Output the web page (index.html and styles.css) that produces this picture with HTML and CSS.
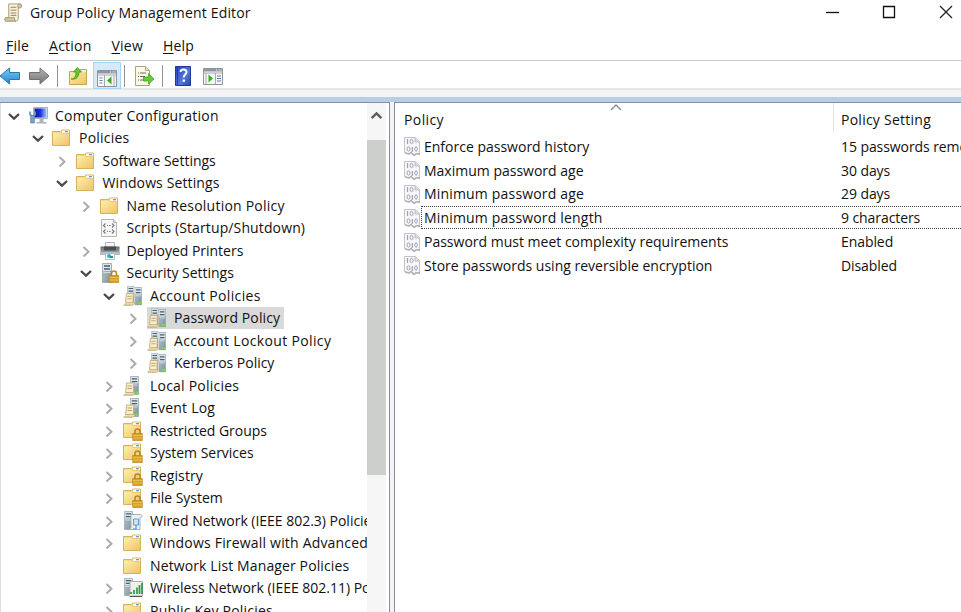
FILE: index.html
```html
<!DOCTYPE html>
<html lang="en">
<head>
<meta charset="utf-8">
<title>Group Policy Management Editor</title>
<link rel="stylesheet" href="styles.css">
</head>
<body>
<svg class="defs" width="0" height="0">
  <defs>
    <linearGradient id="gold" x1="0" y1="0" x2="1" y2="1"><stop offset="0" stop-color="#ffeeb0"/><stop offset="1" stop-color="#ecc663"/></linearGradient>
    <linearGradient id="steel" x1="0" y1="0" x2="1" y2="1"><stop offset="0" stop-color="#b9c8d1"/><stop offset="1" stop-color="#7f919c"/></linearGradient>
    <linearGradient id="screen" x1="0" y1="0" x2="1" y2="0"><stop offset="0" stop-color="#0717b8"/><stop offset=".5" stop-color="#1a35d4"/><stop offset="1" stop-color="#a8c4fa"/></linearGradient>
    <linearGradient id="blue" x1="0" y1="0" x2="0" y2="1"><stop offset="0" stop-color="#79cdf5"/><stop offset="1" stop-color="#2484cd"/></linearGradient>
    <linearGradient id="grey" x1="0" y1="0" x2="0" y2="1"><stop offset="0" stop-color="#b4b4b4"/><stop offset="1" stop-color="#747474"/></linearGradient>
    <linearGradient id="book" x1="0" y1="0" x2="1" y2="1"><stop offset="0" stop-color="#2447b4"/><stop offset=".6" stop-color="#5277dc"/><stop offset="1" stop-color="#2443a8"/></linearGradient>
    <linearGradient id="case" x1="0" y1="0" x2="0" y2="1"><stop offset="0" stop-color="#66686b"/><stop offset=".5" stop-color="#8d9093"/><stop offset="1" stop-color="#b4b7b9"/></linearGradient>
  </defs>
  <symbol id="open" viewBox="0 0 12 12"><path d="M1 4 6 8.700 11 4" fill="none" stroke="#4a4a4a" stroke-width="2.300"/></symbol>
  <symbol id="closed" viewBox="0 0 12 12"><path d="M3.500 2 8.500 6.800 3.500 11.500" fill="none" stroke="#ababab" stroke-width="2"/></symbol>
  <symbol id="lock" viewBox="0 0 20 20"><path d="M12 13v-2.500a2.500 2.500 0 0 1 5 0V13" fill="none" stroke="#b58a2a" stroke-width="1.600"/><path d="M9.700 12.500h9.600v7H9.700z" fill="#d8a029" stroke="#b07b18" stroke-width=".6"/><path d="M10 14.500h9M10 17h9" stroke="#f0c65a" stroke-width=".8"/></symbol>
  <symbol id="folder" viewBox="0 0 20 20"><path d="M.5 3.500h8l1.500-1.500h7.500v15.500H.5z" fill="#edcb73" stroke="#d5b25b"/><path d="M10 2.500h7v2.500h-7z" fill="#fffdf0"/><path d="M13 3h3v1.300h-3z" fill="#52a1d8"/><path d="M1 4.500h7.500L10 6h7v11H1z" fill="url(#gold)"/></symbol>
  <symbol id="lockfolder" viewBox="0 0 20 20"><use href="#folder" y="-1"/><use href="#lock"/></symbol>
  <symbol id="computer" viewBox="0 0 20 20"><path d="M5.500 1.500h14v11h-14z" fill="#d8dce0" stroke="#aab2bc"/><path d="M6.500 2.500h12v9h-12z" fill="url(#screen)"/><path d="M11.500 13h4v3h3v1.500h-10V16h3z" fill="#aeb3b8"/><path d="M2 5.500v3l2 1.500h1l2-1.500v-3" fill="none" stroke="#7b98b5" stroke-width="1.800"/><path d="M2.700 9.500h3.600V17H2.700z" fill="#7ea3c8" stroke="#52779c" stroke-width=".7"/></symbol>
  <symbol id="script" viewBox="0 0 20 20"><path d="M1.500 1.500h12l3 3v14h-15z" fill="#f7f7f7" stroke="#b5b5b5"/><path d="M13.500 1.500v3h3" fill="#ddd" stroke="#b5b5b5"/><path d="M5.500 5.500 3.500 7.500l2 2M12 5.500l2 2-2 2M7 7.500h1m1 0h1.500M5.500 11.500l-2 2 2 2m6.500-4 2 2-2 2M7 13.500h1m1 0h1.500" fill="none" stroke="#777" stroke-width="1.100"/></symbol>
  <symbol id="printer" viewBox="0 0 20 20"><path d="M5.500 1.500h9V8h-9z" fill="#f2f6fa" stroke="#b5b8ba"/><path d="M.5 5.500h19v8.500H.5z" fill="url(#case)"/><path d="M4 5.500h12v4H4z" fill="#4c4f52"/><path d="M0 11h20v3H0z" fill="#b9bcbe"/><path d="M5.500 12.500h9v6h-9z" fill="#f2faff" stroke="#a9c4d8"/><circle cx="9" cy="15" r="2" fill="#38a9d8"/><path d="M10 15h3v2h-3z" fill="#2c9261"/></symbol>
  <symbol id="tower" viewBox="0 0 10 20" preserveAspectRatio="none"><path d="M.5.5h9v19h-9z" fill="url(#steel)" stroke="#8fa0aa" stroke-width=".7"/><path d="M1 1h8v7H1z" fill="#d9e5ec"/><path d="M2 3h6M2 6h6" stroke="#4a5d6a" stroke-width="1.300"/><path d="M1.500 9.500h7" stroke="#d5dfe5"/></symbol>
  <symbol id="scroll" viewBox="0 0 14 14"><path d="M3.500 1h8c-1 1-1 2-1 3v6.500c0 1.500-.5 2.500-2 2.500H.8c1.500-.5 1.900-1.500 1.900-3z" fill="#fbeec6" stroke="#bfaa7c" stroke-width=".9"/><path d="M.8 13h9c1.500 0 2-1 2-2.500H3" fill="#f0dfb4" stroke="#bfaa7c" stroke-width=".9"/><path d="M4.500 4h4.500M4.500 6.500h4.500" stroke="#bba676"/></symbol>
  <symbol id="serverlock" viewBox="0 0 20 20"><use href="#tower" x="2" y="0" width="10" height="20"/><use href="#lock" x="-.5"/></symbol>
  <symbol id="onetower" viewBox="0 0 20 20"><use href="#tower" x="7" y="0" width="9" height="19"/><use href="#scroll" x="0" y="6" width="14" height="14"/><path d="M12.500 15.500h3v2.500h-3z" fill="#6dde3e"/></symbol>
  <symbol id="twotower" viewBox="0 0 20 20"><use href="#tower" x="4" y="0" width="7.500" height="17"/><use href="#tower" x="11.500" y="1" width="7.500" height="18.500"/><use href="#scroll" x="0" y="6.500" width="13.500" height="13.500"/><path d="M15 16h3.500v2.500H15z" fill="#6dde3e"/></symbol>
  <symbol id="wired" viewBox="0 0 20 20"><use href="#tower" x="1" y="0" width="9" height="19"/><path d="M8 3.500h9.500c2 0 2 3 0 3H17v12H6.500c2-1 1.500-3 1.500-5z" fill="#edf1ef" stroke="#a8b1b7"/><path d="M10.500 8h5v6h-5z" fill="#cfe4f4" stroke="#5f9dcb"/><path d="M13 14v4h-3" fill="none" stroke="#6aa9d8" stroke-width="1.500"/></symbol>
  <symbol id="wireless" viewBox="0 0 20 20"><use href="#tower" x="1" y="0" width="9" height="18"/><path d="M7 3.500h12.500V18H5.500C7 16.500 7 15 7 13z" fill="#f0f0e7" stroke="#a8b1b7"/><path d="M8 16v-2m3 2v-4m3 4V9.500m2.500 6.500V7M19 16V5" stroke="#239a50" stroke-width="1.700"/><path d="M7 18.500h12" stroke="#555"/></symbol>
  <symbol id="binary" viewBox="0 0 18 20"><path d="M1.500 1.500h11l4 4v13l-3-1-3 1-2-2-3 1.500-4-1.500z" fill="#f8f8fa" stroke="#c4c4c6"/><path d="M12 1.500v4.500h4.500" fill="#e1e1e3" stroke="#bcbcbf"/><path d="M4.500 3v5M9.300 11v5" stroke="#9ba0b5" stroke-width="1.200"/><ellipse cx="8.500" cy="5.500" rx="1.500" ry="2.200" fill="none" stroke="#a0a5b8"/><ellipse cx="5.500" cy="13" rx="1.500" ry="2.200" fill="none" stroke="#a0a5b8"/><ellipse cx="13" cy="13" rx="1.300" ry="2.200" fill="none" stroke="#a0a5b8"/><path d="m2 17 4 1 2-1.500 3 3 3-2 3 1" fill="none" stroke="#b0b0b2" stroke-width="1.500"/></symbol>
  <symbol id="console" viewBox="0 0 20 17"><path d="M.5.5h19v16H.5z" fill="#f6f6f4" stroke="#909398"/><path d="M1 1h18v2.500H1z" fill="#8d98a6"/><path d="M13 2h1m1.500 0h1m1 0h1" stroke="#fff"/><path d="M1 5h18" stroke="#a8adb3"/></symbol>
</svg>

<div class="window">
  <header class="titlebar">
    <svg class="app-icon" viewBox="0 0 20 20"><path d="M5 1h12c2 0 2.500 4 0 4h-2v11c0 2-1 3-3 3H2c-1.500 0-1.500-3.500 0-3.500h3z" fill="#faf2d5" stroke="#a5977a"/><path d="M15 5c-1-1-1-4 1.500-4 2.500 0 2.500 4 0 4zM2 15.500h9c0 2 0 3.500 1.500 3.500H2c-1.500 0-1.500-3.500 0-3.500" fill="#d6c9a5" stroke="#a5977a"/><path d="M7 4.500h6m-6 3h6m-6 3h6m-6 2.500h6" stroke="#8b8064"/></svg>
    <h1>Group Policy Management Editor</h1>
    <div class="controls">
      <svg viewBox="0 0 14 14"><path d="M1 7.500h13" stroke="#111" stroke-width="1.300"/></svg>
      <svg viewBox="0 0 14 14"><path d="M1.500 1.500h11v11h-11z" fill="none" stroke="#111" stroke-width="1.300"/></svg>
      <svg viewBox="0 0 14 14"><path d="m1 1 12 12M13 1 1 13" stroke="#222" stroke-width="1.300"/></svg>
    </div>
  </header>
  <nav class="menu"><span><u>F</u>ile</span><span><u>A</u>ction</span><span><u>V</u>iew</span><span><u>H</u>elp</span></nav>
  <div class="toolbar">
    <svg class="back" viewBox="0 0 20 18"><path d="M0 9 9.500 1v4.500h10v7h-10V17z" fill="url(#blue)" stroke="#2b77ad"/></svg>
    <svg class="forward" viewBox="0 0 20 18"><path d="M20 9 11 1v4.500H.5v7H11V17z" fill="url(#grey)" stroke="#707070"/></svg>
    <i class="sep s1"></i>
    <svg class="up" viewBox="0 0 20 20"><path d="M1.500 5.500h9l2-2h6v15h-17z" fill="url(#gold)" stroke="#c9a550"/><path d="M13 4h5v2h-5z" fill="#e3f0f6"/><path d="M3 13c4 0 5-3 5-7H5.500L9.500 1.500 13.500 6h-2.500c0 5-3 8-8 7z" fill="#64c92d" stroke="#3f991d" stroke-width=".8"/></svg>
    <span class="pressed"><svg viewBox="0 0 20 17"><use href="#console"/><path d="M2 7h4v8H2z" fill="#fff"/><path d="M2.500 8h3m-3 2.500h3m-3 2.500h3" stroke="#5680aa"/><path d="M7.500 5v11M17 5v11" stroke="#aaa"/><path d="m14.500 6.500v8l-4.500-4z" fill="#39ad25"/></svg></span>
    <i class="sep s2"></i>
    <svg class="export" viewBox="0 0 20 20"><path d="M1.500.5h10l4 4v15h-14z" fill="#fcf8e2" stroke="#aaa28a"/><path d="M11.500.5v4h4" fill="#e5dfc5" stroke="#b4aa8f"/><path d="M4 7h1m1 0h6M4 10.500h1m1 0h5M4 14h1m1 0h6" stroke="#6a6a70" stroke-width="1.200"/><path d="M9.500 11h5V7.500l5.500 5.500-5.500 5v-3h-5z" fill="#61cb3c" stroke="#46a52a" stroke-width=".8"/></svg>
    <i class="sep s3"></i>
    <svg class="help" viewBox="0 0 16 20"><path d="M.5.5h15v19H.5z" fill="url(#book)" stroke="#203b95"/><path d="M2.500 1v18" stroke="#2040a0"/><path d="M5.500 6c0-3.500 6-3.500 6 0 0 2.500-2.800 2.500-2.800 5.500" fill="none" stroke="#fff" stroke-width="2"/><path d="M7.700 13.500h2.300v2.300H7.700z" fill="#fff"/></svg>
    <svg class="action-pane" viewBox="0 0 20 17"><use href="#console"/><path d="M12.500 5v11M3 5v11" stroke="#aaa"/><path d="M14 8h4m-4 2.500h4M14 13h4" stroke="#5680aa"/><path d="m5.500 6.500v8l4.500-4z" fill="#39ad25"/></svg>
  </div>
  <div class="frame"></div>
  <main>
    <section class="tree-pane">
      <ul class="tree">
        <li class="l0"><svg class="tw"><use href="#open"/></svg><svg class="ic"><use href="#computer"/></svg><span>Computer Configuration</span></li>
        <li class="l1"><svg class="tw"><use href="#open"/></svg><svg class="ic"><use href="#folder"/></svg><span>Policies</span></li>
        <li class="l2"><svg class="tw"><use href="#closed"/></svg><svg class="ic"><use href="#folder"/></svg><span class="tight">Software Settings</span></li>
        <li class="l2"><svg class="tw"><use href="#open"/></svg><svg class="ic"><use href="#folder"/></svg><span class="mid">Windows Settings</span></li>
        <li class="l3"><svg class="tw"><use href="#closed"/></svg><svg class="ic"><use href="#folder"/></svg><span>Name Resolution Policy</span></li>
        <li class="l3"><svg class="tw"></svg><svg class="ic"><use href="#script"/></svg><span class="mid">Scripts (Startup/Shutdown)</span></li>
        <li class="l3"><svg class="tw"><use href="#closed"/></svg><svg class="ic"><use href="#printer"/></svg><span class="tight">Deployed Printers</span></li>
        <li class="l3"><svg class="tw"><use href="#open"/></svg><svg class="ic"><use href="#serverlock"/></svg><span class="tight">Security Settings</span></li>
        <li class="l4"><svg class="tw"><use href="#open"/></svg><svg class="ic"><use href="#twotower"/></svg><span class="wide">Account Policies</span></li>
        <li class="l5 selected"><svg class="tw"><use href="#closed"/></svg><svg class="ic"><use href="#twotower"/></svg><span class="mid">Password Policy</span></li>
        <li class="l5"><svg class="tw"><use href="#closed"/></svg><svg class="ic"><use href="#twotower"/></svg><span class="wide">Account Lockout Policy</span></li>
        <li class="l5"><svg class="tw"><use href="#closed"/></svg><svg class="ic"><use href="#twotower"/></svg><span class="tight">Kerberos Policy</span></li>
        <li class="l4"><svg class="tw"><use href="#closed"/></svg><svg class="ic"><use href="#onetower"/></svg><span>Local Policies</span></li>
        <li class="l4"><svg class="tw"><use href="#closed"/></svg><svg class="ic"><use href="#onetower"/></svg><span>Event Log</span></li>
        <li class="l4"><svg class="tw"><use href="#closed"/></svg><svg class="ic"><use href="#lockfolder"/></svg><span class="tight">Restricted Groups</span></li>
        <li class="l4"><svg class="tw"><use href="#closed"/></svg><svg class="ic"><use href="#lockfolder"/></svg><span class="tight">System Services</span></li>
        <li class="l4"><svg class="tw"><use href="#closed"/></svg><svg class="ic"><use href="#lockfolder"/></svg><span class="mid">Registry</span></li>
        <li class="l4"><svg class="tw"><use href="#closed"/></svg><svg class="ic"><use href="#lockfolder"/></svg><span class="tight">File System</span></li>
        <li class="l4"><svg class="tw"><use href="#closed"/></svg><svg class="ic"><use href="#wired"/></svg><span class="tight">Wired Network (IEEE 802.3) Policies</span></li>
        <li class="l4"><svg class="tw"><use href="#closed"/></svg><svg class="ic"><use href="#folder"/></svg><span class="adv">Windows Firewall with Advanced Security</span></li>
        <li class="l4"><svg class="tw"></svg><svg class="ic"><use href="#folder"/></svg><span class="mid">Network List Manager Policies</span></li>
        <li class="l4"><svg class="tw"><use href="#closed"/></svg><svg class="ic"><use href="#wireless"/></svg><span class="tight">Wireless Network (IEEE 802.11) Policies</span></li>
        <li class="l4"><svg class="tw"><use href="#closed"/></svg><svg class="ic"><use href="#folder"/></svg><span>Public Key Policies</span></li>
      </ul>
      <div class="scrollbar"><svg viewBox="0 0 12 12"><path d="M1.500 8.500 6 4l4.500 4.500" fill="none" stroke="#5d5d5d" stroke-width="2.200"/></svg><div class="thumb"></div></div>
    </section>
    <section class="list-pane">
      <div class="list-head"><span class="name">Policy<svg class="sort" viewBox="0 0 12 7"><path d="m1 6 5-5 5 5" fill="none" stroke="#8a8a8a" stroke-width="1.300"/></svg></span><span class="setting">Policy Setting</span></div>
      <div class="row"><svg class="bin"><use href="#binary"/></svg><div class="cells"><span>Enforce password history</span><span>15 passwords remembered</span></div></div>
      <div class="row"><svg class="bin"><use href="#binary"/></svg><div class="cells"><span>Maximum password age</span><span>30 days</span></div></div>
      <div class="row"><svg class="bin"><use href="#binary"/></svg><div class="cells"><span class="loose">Minimum password age</span><span>29 days</span></div></div>
      <div class="row focused"><svg class="bin"><use href="#binary"/></svg><div class="cells"><span class="loose">Minimum password length</span><span>9 characters</span></div></div>
      <div class="row"><svg class="bin"><use href="#binary"/></svg><div class="cells"><span>Password must meet complexity requirements</span><span>Enabled</span></div></div>
      <div class="row"><svg class="bin"><use href="#binary"/></svg><div class="cells"><span>Store passwords using reversible encryption</span><span>Disabled</span></div></div>
    </section>
  </main>
</div>
</body>
</html>
```

FILE: styles.css
```css
* { box-sizing: border-box; }
body { margin: 0; background: #fff; overflow: hidden; font: 14px/20px "Open Sans", "Noto Sans", sans-serif; color: #111; }
svg { display: block; flex: none; }
.defs { position: absolute; }
.window { width: 961px; height: 612px; display: flex; flex-direction: column; overflow: hidden; }
.titlebar { height: 30px; flex: none; display: flex; align-items: flex-start; padding: 3px 8px 0 4px; }
.app-icon { width: 19px; height: 19px; }
h1 { margin: 0 0 0 7px; font-size: 14px; line-height: 20px; font-weight: 400; letter-spacing: .17px; }
.controls { margin-left: auto; display: flex; gap: 43px; padding-top: 2px; }
.controls svg { width: 14px; height: 14px; }
.menu { height: 30px; flex: none; display: flex; gap: 20px; padding: 5px 0 0 6px; line-height: 22px; letter-spacing: .22px; }
.menu u { text-underline-offset: 2px; text-decoration-thickness: 1px; }
.toolbar { height: 30px; flex: none; display: flex; align-items: center; padding-top: 2px; border-top: 1px solid #c9cccb; border-bottom: 2px solid #e7e7e7; }
.back { width: 20px; height: 18px; }
.forward { width: 20px; height: 18px; margin-left: 9px; }
.sep { width: 1px; height: 22px; background: #929292; flex: none; }
.s1 { margin: 0 10px 0 8px; }
.s2 { margin: 0 9px 0 3px; }
.s3 { margin: 0 12px 0 8px; }
.up { width: 20px; height: 20px; }
.pressed { width: 28px; height: 27px; margin: -1px 0 0 5px; flex: none; background: #d5ebfc; border: 1px solid #a6d5f7; padding: 7px 3px 0; }
.pressed svg { width: 20px; height: 17px; }
.export { width: 20px; height: 20px; }
.help { width: 16px; height: 20px; }
.action-pane { width: 20px; height: 17px; margin: 2px 0 0 12px; }
.frame { height: 12px; flex: none; background: #f4f4f4; border-bottom: 5px solid #b7cee7; }
main { flex: 1; min-height: 0; display: flex; gap: 4px; background: #f4f4f7; }
.tree-pane { width: 390px; flex: none; display: flex; overflow: hidden; background: #fff; border: solid #8b8c9c; border-width: 1px 1px 0 0; }
.tree { margin: 0; padding: 1.500px 0 0; list-style: none; flex: 1; min-width: 0; overflow: hidden; border-left: 1px solid #ddd; letter-spacing: .22px; }
.tree li { height: 22.5px; display: flex; align-items: center; white-space: nowrap; }
.tw { width: 12px; height: 12px; margin-right: 8px; }
.ic { width: 20px; height: 20px; }
.tree span { padding: 0 4px 0 7px; height: 22px; line-height: 21px; }
.tree .tight { letter-spacing: -.02px; }
.tree .mid { letter-spacing: .12px; }
.tree .adv { letter-spacing: .19px; }
.tree .wide { letter-spacing: .35px; }
.l0 { padding-left: 7px; }
.l1 { padding-left: 31px; }
.l2 { padding-left: 54.500px; }
.l3 { padding-left: 78.500px; }
.l4 { padding-left: 102px; }
.l5 { padding-left: 126px; }
.selected .ic, .selected span { background-color: #d9d9d9; }
.selected .ic { height: 22px; padding: 1px 0; }
.scrollbar { width: 22px; flex: none; background: #f6f6f6; padding: 6px 0 0; border-right: 3px solid #fff; }
.scrollbar svg { width: 13px; height: 13px; margin: 0 auto; }
.thumb { height: 335px; margin-top: 18px; background: #cdcfcd; }
.list-pane { flex: 1; min-width: 0; overflow: hidden; background: #fff; border: solid #8b8c9c; border-width: 1px 0 0 1px; }
.list-head { height: 31.500px; display: flex; line-height: 33px; }
.name { width: 438px; flex: none; padding-left: 9px; position: relative; letter-spacing: .4px; }
.sort { position: absolute; left: 215px; top: 1px; width: 12px; height: 7px; }
.setting { height: 30px; border-left: 1px solid #e5e5e5; padding-left: 7px; white-space: nowrap; letter-spacing: .25px; }
.row { height: 23.800px; display: flex; align-items: center; padding-left: 8px; }
.bin { width: 18px; height: 20px; }
.cells { flex: 1; min-width: 0; display: flex; height: 23px; line-height: 22px; border: 1px solid transparent; border-right: 0; white-space: nowrap; }
.cells span:first-child { width: 418px; flex: none; padding-left: 2px; }
.cells span:last-child { padding-left: 1px; letter-spacing: -.08px; }
.cells .loose { letter-spacing: .18px; }
.focused .cells { border-color: #444; border-style: dotted; border-right: 0; }
```
